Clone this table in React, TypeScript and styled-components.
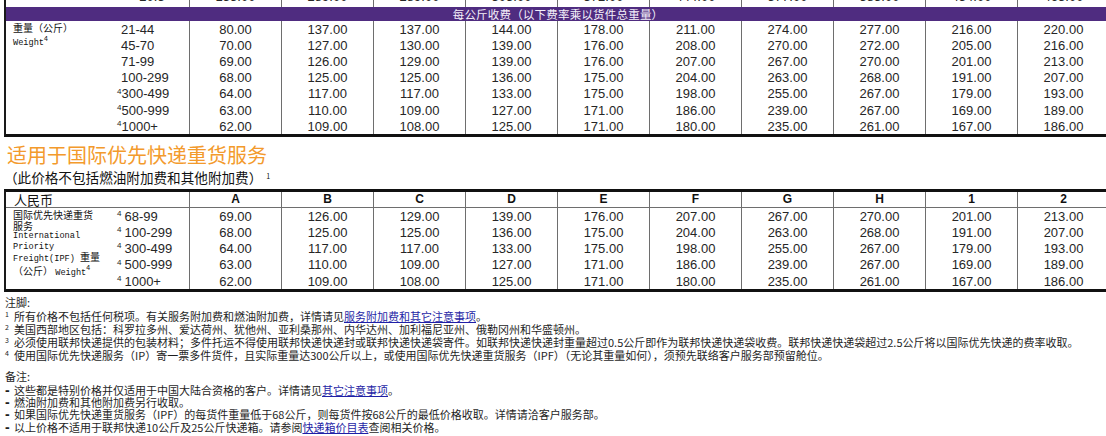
import React from "react";
import styled, { createGlobalStyle } from "styled-components";

const GlobalStyle = createGlobalStyle`
  html, body { margin: 0; padding: 0; background: #fff; }
  body {
    width: 1106px;
    height: 436px;
    overflow: hidden;
    font-family: "Liberation Sans", "Noto Sans CJK SC", sans-serif;
    color: #222;
  }
`;

const Page = styled.div`
  display: flex;
  flex-direction: column;
  padding-left: 4px;
`;

const RateTable = styled.table<{ $first?: boolean }>`
  border-collapse: separate;
  border-spacing: 0;
  table-layout: fixed;
  width: 1106px;
  margin-top: ${(p) => (p.$first ? "-13px" : "4px")};
  border-left: 2px solid #1a1a1a;
  border-top: ${(p) => (p.$first ? "none" : "3px solid #111")};
  border-bottom: 3px solid #111;
`;

const Col = styled.col<{ $w: number }>`
  width: ${(p) => p.$w}px;
`;

const Row = styled.tr<{ $h: number }>`
  height: ${(p) => p.$h}px;
`;

const NumCell = styled.td`
  padding: 0;
  text-align: center;
  vertical-align: middle;
  font-family: "Liberation Sans", Arial, sans-serif;
  font-size: 13px;
  line-height: 15px;
  color: #262626;
  border-right: 1px solid #6e6e6e;
  white-space: nowrap;
`;

const CutCell = styled(NumCell)`
  vertical-align: top;
  padding-top: 2px;
`;

const RangeCell = styled(NumCell)<{ $pad: number }>`
  text-align: left;
  padding-left: ${(p) => p.$pad}px;
`;

const BlankCell = styled.td`
  padding: 0;
`;

const LabelCell = styled.td<{ $padTop: number }>`
  padding: ${(p) => p.$padTop}px 0 0 7px;
  vertical-align: top;
  font-family: "Noto Sans CJK SC", sans-serif;
  font-size: 10px;
  color: #111;
  white-space: nowrap;
`;

const LabelLine = styled.div<{ $h: number }>`
  height: ${(p) => p.$h}px;
  line-height: 11px;
  overflow: visible;
`;

const Mono = styled.span`
  font-family: "Liberation Mono", "DejaVu Sans Mono", monospace;
  font-size: 8.6px;
`;

const Band = styled.td`
  padding: 0;
  height: 14px;
  background: #4f2c80;
  color: #f4f0fa;
  text-align: center;
  font-family: "Noto Sans CJK SC", sans-serif;
  font-size: 11.5px;
  line-height: 14px;
  letter-spacing: 0.2px;
`;

const HeadCell = styled.th`
  padding: 0;
  font-family: "Liberation Sans", Arial, sans-serif;
  font-weight: bold;
  font-size: 12px;
  line-height: 15px;
  text-align: center;
  color: #111;
  border-right: 1px solid #6e6e6e;
  border-bottom: 1px solid #6e6e6e;
`;

const CurrencyHead = styled(HeadCell)`
  text-align: left;
  padding-left: 8px;
  font-family: "Noto Sans CJK SC", sans-serif;
  font-weight: normal;
  font-size: 13px;
`;

const Sup = styled.sup<{ $size: number; $gap: number }>`
  font-size: ${(p) => p.$size}px;
  line-height: 0;
  vertical-align: ${(p) => p.$size * 0.6}px;
  margin-left: ${(p) => p.$gap}px;
  margin-right: ${(p) => (p.$gap < 0 ? 0 : 3)}px;
`;

const Heading = styled.h2`
  margin: 6px 0 0 3px;
  font-family: "Noto Sans CJK SC", sans-serif;
  font-weight: normal;
  font-size: 20px;
  line-height: 24px;
  color: #f39a2c;
`;

const SubHeading = styled.div`
  margin: 2px 0 0 0;
  font-family: "Noto Sans CJK SC", sans-serif;
  font-size: 13.6px;
  line-height: 16px;
  color: #111;
`;

const NoteBlock = styled.section<{ $mt: number; $lh: number }>`
  margin-top: ${(p) => p.$mt}px;
  font-family: "Noto Sans CJK SC", sans-serif;
  font-size: 11px;
  line-height: ${(p) => p.$lh}px;
  color: #1e1e1e;
  white-space: nowrap;
`;

const NoteTitle = styled.div`
  padding-left: 1px;
  margin-bottom: 1px;
`;

const NoteLine = styled.div`
  display: grid;
  grid-template-columns: 10px auto;
`;

const Marker = styled.span<{ $dash?: boolean }>`
  font-family: ${(p) => (p.$dash ? '"Liberation Sans", sans-serif' : "inherit")};
  font-size: ${(p) => (p.$dash ? "14px" : "7px")};
  font-weight: ${(p) => (p.$dash ? 900 : "normal")};
  line-height: ${(p) => (p.$dash ? "12px" : "9px")};
  padding-left: 1px;
`;

const Link = styled.a`
  color: #1f1fa6;
  text-decoration: underline;
`;

const zones = ["A", "B", "C", "D", "E", "F", "G", "H", "1", "2"];

const cutRow = ["20.5", "155.00", "289.00", "289.00", "305.00", "372.00", "444.00", "577.00", "583.00", "454.00", "463.00"];

const weightRows: { range: string; note: boolean; v: string[] }[] = [
  { range: "21-44", note: false, v: ["80.00", "137.00", "137.00", "144.00", "178.00", "211.00", "274.00", "277.00", "216.00", "220.00"] },
  { range: "45-70", note: false, v: ["70.00", "127.00", "130.00", "139.00", "176.00", "208.00", "270.00", "272.00", "205.00", "216.00"] },
  { range: "71-99", note: false, v: ["69.00", "126.00", "129.00", "139.00", "176.00", "207.00", "267.00", "270.00", "201.00", "213.00"] },
  { range: "100-299", note: false, v: ["68.00", "125.00", "125.00", "136.00", "175.00", "204.00", "263.00", "268.00", "191.00", "207.00"] },
  { range: "300-499", note: true, v: ["64.00", "117.00", "117.00", "133.00", "175.00", "198.00", "255.00", "267.00", "179.00", "193.00"] },
  { range: "500-999", note: true, v: ["63.00", "110.00", "109.00", "127.00", "171.00", "186.00", "239.00", "267.00", "169.00", "189.00"] },
  { range: "1000+", note: true, v: ["62.00", "109.00", "108.00", "125.00", "171.00", "180.00", "235.00", "261.00", "167.00", "186.00"] },
];

const ipfRows: { range: string; v: string[] }[] = [
  { range: "68-99", v: ["69.00", "126.00", "129.00", "139.00", "176.00", "207.00", "267.00", "270.00", "201.00", "213.00"] },
  { range: "100-299", v: ["68.00", "125.00", "125.00", "136.00", "175.00", "204.00", "263.00", "268.00", "191.00", "207.00"] },
  { range: "300-499", v: ["64.00", "117.00", "117.00", "133.00", "175.00", "198.00", "255.00", "267.00", "179.00", "193.00"] },
  { range: "500-999", v: ["63.00", "110.00", "109.00", "127.00", "171.00", "186.00", "239.00", "267.00", "169.00", "189.00"] },
  { range: "1000+", v: ["62.00", "109.00", "108.00", "125.00", "171.00", "180.00", "235.00", "261.00", "167.00", "186.00"] },
];

const Cols = () => (
  <colgroup>
    <Col $w={109} />
    <Col $w={75} />
    {zones.map((z) => (
      <Col key={z} $w={92} />
    ))}
  </colgroup>
);

export default function App() {
  return (
    <>
      <GlobalStyle />
      <Page>
        <RateTable $first>
          <Cols />
          <tbody>
            <Row $h={20}>
              <BlankCell />
              <CutCell>{cutRow[0]}</CutCell>
              {cutRow.slice(1).map((v, i) => (
                <CutCell key={i}>{v}</CutCell>
              ))}
            </Row>
            <tr>
              <Band colSpan={12}>每公斤收费（以下费率乘以货件总重量）</Band>
            </tr>
            {weightRows.map((r, ri) => (
              <Row $h={16.2} key={r.range}>
                {ri === 0 && (
                  <LabelCell rowSpan={7} $padTop={1}>
                    <LabelLine $h={13}>重量（公斤）</LabelLine>
                    <LabelLine $h={13}>
                      <Mono>Weight</Mono>
                      <Sup $size={7} $gap={0}>4</Sup>
                    </LabelLine>
                  </LabelCell>
                )}
                <RangeCell $pad={6}>
                  {r.note && <Sup $size={8} $gap={-4}>4</Sup>}
                  {r.range}
                </RangeCell>
                {r.v.map((v, i) => (
                  <NumCell key={i}>{v}</NumCell>
                ))}
              </Row>
            ))}
          </tbody>
        </RateTable>

        <Heading>适用于国际优先快递重货服务</Heading>
        <SubHeading>
          （此价格不包括燃油附加费和其他附加费）
          <Sup $size={7} $gap={4}>1</Sup>
        </SubHeading>

        <RateTable>
          <Cols />
          <thead>
            <Row $h={16}>
              <CurrencyHead colSpan={2}>人民币</CurrencyHead>
              {zones.map((z) => (
                <HeadCell key={z}>{z}</HeadCell>
              ))}
            </Row>
          </thead>
          <tbody>
            {ipfRows.map((r, ri) => (
              <Row $h={16.2} key={r.range}>
                {ri === 0 && (
                  <LabelCell rowSpan={5} $padTop={1}>
                    <LabelLine $h={10.5}>国际优先快递重货</LabelLine>
                    <LabelLine $h={8}>服务</LabelLine>
                    <LabelLine $h={11.2}>
                      <Mono> International</Mono>
                    </LabelLine>
                    <LabelLine $h={11.6}>
                      <Mono>Priority</Mono>
                    </LabelLine>
                    <LabelLine $h={14}>
                      <Mono>Freight(IPF) </Mono>重量
                    </LabelLine>
                    <LabelLine $h={12}>
                      （公斤） <Mono>Weight</Mono>
                      <Sup $size={7} $gap={0}>4</Sup>
                    </LabelLine>
                  </LabelCell>
                )}
                <RangeCell $pad={2}>
                  <Sup $size={8} $gap={0}>4</Sup>
                  {r.range}
                </RangeCell>
                {r.v.map((v, i) => (
                  <NumCell key={i}>{v}</NumCell>
                ))}
              </Row>
            ))}
          </tbody>
        </RateTable>

        <NoteBlock $mt={4} $lh={13}>
          <NoteTitle>注脚:</NoteTitle>
          <NoteLine>
            <Marker>1</Marker>
            <span>
              所有价格不包括任何税项。有关服务附加费和燃油附加费，详情请见
              <Link href="#">服务附加费和其它注意事项</Link>。
            </span>
          </NoteLine>
          <NoteLine>
            <Marker>2</Marker>
            <span>美国西部地区包括：科罗拉多州、爱达荷州、犹他州、亚利桑那州、内华达州、加利福尼亚州、俄勒冈州和华盛顿州。</span>
          </NoteLine>
          <NoteLine>
            <Marker>3</Marker>
            <span>
              必须使用联邦快递提供的包装材料；多件托运不得使用联邦快递快递封或联邦快递快递袋寄件。如联邦快递快递封重量超过0.5公斤即作为联邦快递快递袋收费。联邦快递快递袋超过2.5公斤将以国际优先快递的费率收取。
            </span>
          </NoteLine>
          <NoteLine>
            <Marker>4</Marker>
            <span>
              使用国际优先快递服务（IP）寄一票多件货件，且实际重量达300公斤以上，或使用国际优先快递重货服务（IPF）（无论其重量如何），须预先联络客户服务部预留舱位。
            </span>
          </NoteLine>
        </NoteBlock>

        <NoteBlock $mt={8} $lh={12.4}>
          <NoteTitle>备注:</NoteTitle>
          <NoteLine>
            <Marker $dash>-</Marker>
            <span>
              这些都是特别价格并仅适用于中国大陆合资格的客户。详情请见<Link href="#">其它注意事项</Link>。
            </span>
          </NoteLine>
          <NoteLine>
            <Marker $dash>-</Marker>
            <span>燃油附加费和其他附加费另行收取。</span>
          </NoteLine>
          <NoteLine>
            <Marker $dash>-</Marker>
            <span>
              如果国际优先快递重货服务（IPF）的每货件重量低于68公斤，则每货件按68公斤的最低价格收取。详情请洽客户服务部。
            </span>
          </NoteLine>
          <NoteLine>
            <Marker $dash>-</Marker>
            <span>
              以上价格不适用于联邦快递10公斤及25公斤快递箱。请参阅<Link href="#">快递箱价目表</Link>查阅相关价格。
            </span>
          </NoteLine>
        </NoteBlock>
      </Page>
    </>
  );
}
